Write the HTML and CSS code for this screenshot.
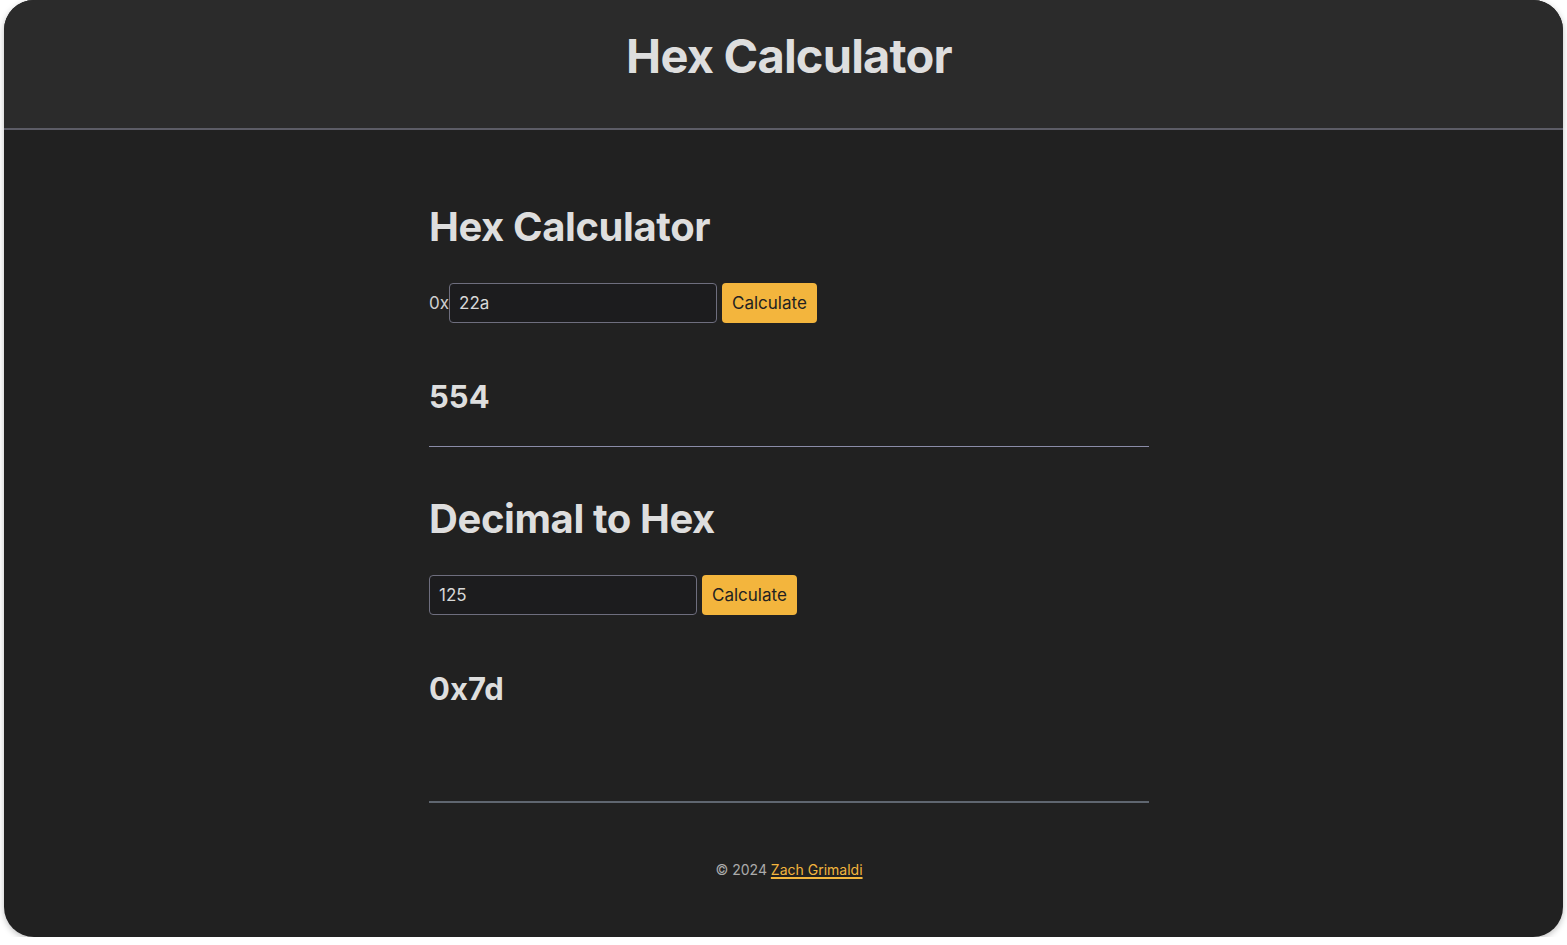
FILE: index.html
```html
<!DOCTYPE html>
<html lang="en">
<head>
<meta charset="utf-8">
<title>Hex Calculator</title>
<link rel="stylesheet" href="styles.css">
</head>
<body>
<div class="window">
  <header class="topbar">
    <h1 class="site-title">Hex Calculator</h1>
  </header>
  <main class="content">
    <section class="tool">
      <h2 class="tool-title">Hex Calculator</h2>
      <form class="calc-row">
        <span class="prefix">0x</span>
        <input class="calc-input" type="text" value="22a">
        <button class="calc-btn" type="button">Calculate</button>
      </form>
      <p class="result">554</p>
    </section>
    <hr class="divider">
    <section class="tool">
      <h2 class="tool-title">Decimal to Hex</h2>
      <form class="calc-row">
        <input class="calc-input" type="text" value="125">
        <button class="calc-btn" type="button">Calculate</button>
      </form>
      <p class="result">0x7d</p>
    </section>
    <hr class="divider divider-foot">
    <footer class="footer">© 2024 <a href="#">Zach Grimaldi</a></footer>
  </main>
</div>
</body>
</html>
```

FILE: styles.css
```css
html, body {
  margin: 0;
  padding: 0;
  background: #ffffff;
}
body {
  font-family: Inter, "Noto Sans", sans-serif;
  color: #dedede;
}
.window {
  margin: 0 4px;
  height: 937px;
  border-radius: 30px;
  overflow: hidden;
  background: #212121;
  box-shadow: 0 2px 6px rgba(0, 0, 0, 0.25);
  display: flex;
  flex-direction: column;
}
.topbar {
  height: 128px;
  background: #2b2b2b;
  border-bottom: 2px solid #5c5c66;
  display: flex;
  justify-content: center;
  padding-left: 11px;
}
.site-title {
  margin: 26px 0 0;
  font-size: 47px;
  font-weight: 700;
  letter-spacing: -0.8px;
  line-height: 60px;
  color: #dedede;
}
.content {
  width: 720px;
  margin: 0 auto;
  padding-left: 11px;
  padding-top: 71px;
  display: flex;
  flex-direction: column;
}
.tool-title {
  margin: 0;
  font-size: 40px;
  font-weight: 700;
  letter-spacing: -0.4px;
  line-height: 52px;
  color: #dedede;
}
.calc-row {
  margin: 30px 0 0;
  display: flex;
  align-items: center;
  gap: 5px;
}
.prefix {
  font-size: 17px;
  color: #cfcfcf;
  margin-right: -5px;
}
.calc-input {
  box-sizing: border-box;
  width: 268px;
  height: 40px;
  background: #1c1c1e;
  border: 1px solid #6e6e7e;
  border-radius: 4px;
  color: #d8d8d8;
  font-family: inherit;
  font-size: 17px;
  padding: 0 9px;
  outline: none;
}
.calc-btn {
  box-sizing: border-box;
  height: 40px;
  padding: 0 10px;
  background: #f3b53d;
  border: none;
  border-radius: 4px;
  color: #222222;
  font-family: inherit;
  font-size: 17px;
}
.result {
  margin: 54px 0 0;
  font-size: 31px;
  font-weight: 700;
  line-height: 40px;
  color: #dedede;
}
.divider {
  width: 100%;
  margin: 29px 0 46px;
  border: none;
  border-top: 1px solid #8a8ca8;
}
.divider-foot {
  margin: 92px 0 58px;
  border-top: 2px solid #5f6670;
}
.footer {
  text-align: center;
  font-size: 14px;
  color: #ababab;
}
.footer a {
  color: #f3b53d;
  text-decoration-thickness: 2px;
  text-underline-offset: 2px;
}
```
